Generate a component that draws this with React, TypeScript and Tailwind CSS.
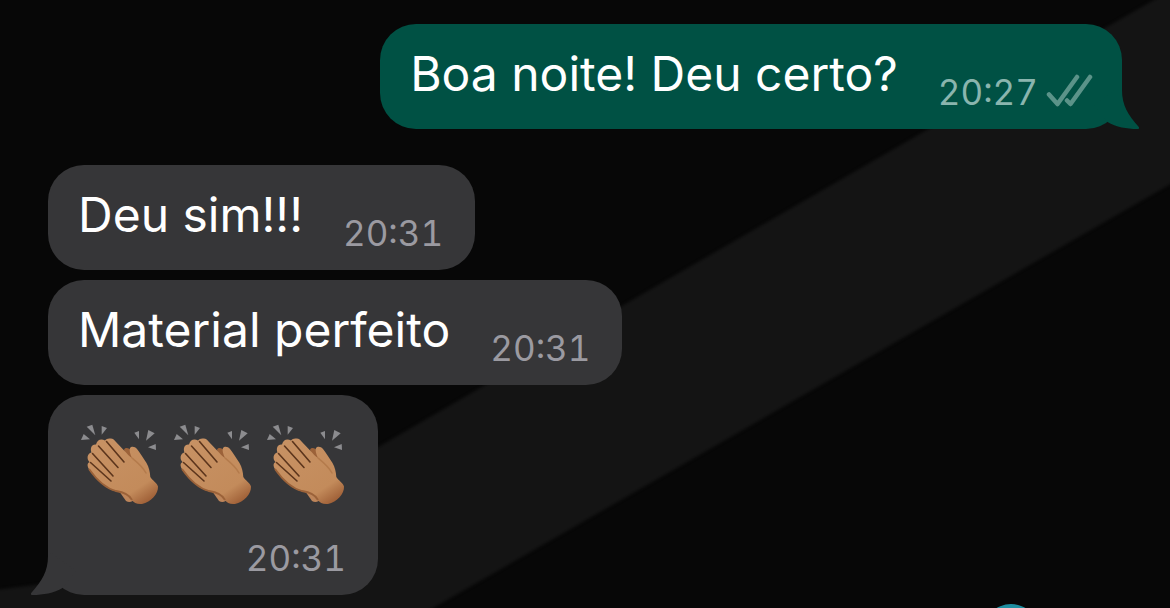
import type { ReactNode } from "react";

function Wallpaper() {
  return (
    <svg
      aria-hidden="true"
      className="absolute inset-0 -z-10 h-full w-full"
      viewBox="0 0 1170 608"
      preserveAspectRatio="xMaxYMin slice"
    >
      <defs>
        <filter id="soft" x="-5%" y="-5%" width="110%" height="110%" colorInterpolationFilters="sRGB">
          <feGaussianBlur stdDeviation="1.5" />
        </filter>
      </defs>
      <path
        d="M1154 0L1190 -21V173L433 608L400 627H-20V592L50 583L380 446L620 307L925 131Z"
        fill="#141414"
        filter="url(#soft)"
      />
      <circle cx="1011" cy="632" r="28" fill="#1f8ea0" />
    </svg>
  );
}

function TailRight() {
  return (
    <svg aria-hidden="true" className="absolute -right-[18px] bottom-0" width="56" height="44" viewBox="0 0 56 44">
      <path d="M38 0V5C38 20 44 30 54.800 42Q56 44 53 44C43 44 32 42 23.500 37L10 20Z" fill="#005144" />
    </svg>
  );
}

function TailLeft() {
  return (
    <svg aria-hidden="true" className="absolute -left-[18px] bottom-0" width="56" height="44" viewBox="0 0 56 44">
      <path d="M18 0V5C18 20 12 30 1.200 42Q0 44 3 44C13 44 24 42 32.500 37L46 20Z" fill="#363638" />
    </svg>
  );
}

function Checks() {
  return (
    <svg
      role="img"
      aria-label="Entregue"
      width="48"
      height="36"
      viewBox="0 0 48 36"
      fill="none"
      stroke="#5b9389"
      strokeWidth="4.5"
      strokeLinecap="round"
      strokeLinejoin="round"
    >
      <path d="M3 20.500L11.500 30L31 3" />
      <path d="M21 26.500L24.500 30L44 3" />
    </svg>
  );
}

function Clap() {
  return (
    <svg role="img" aria-label="Palmas" width="80" height="84" viewBox="0 0 80 84">
      <defs>
        <linearGradient id="skin" x1="0.2" y1="0.1" x2="0.85" y2="1">
          <stop offset="0" stopColor="#c79163" />
          <stop offset="0.75" stopColor="#c38b5b" />
          <stop offset="1" stopColor="#9c5c34" />
        </linearGradient>
      </defs>
      <g fill="#8c8c8f">
        <path d="M1 19L3.700 13L10 18.300Z" />
        <path d="M6.700 5.700L12.300 3.700L15.300 14.300Z" />
        <path d="M21.700 5L27 7L21.700 13.700Z" />
        <path d="M54.300 11.700L59 10L59 18.300Z" />
        <path d="M68.300 9L74.700 12.300L66 19.700Z" />
        <path d="M75.700 23L76 29L68 26.300Z" />
      </g>
      <path d="M44 29C45 25.500 50 27 52 31L56 40L46 35Z" fill="#9c6239" />
      <path d="M39 70L46 80C49 82 53 81 54 78L50 70Z" fill="#bd855a" />
      <path
        d="M30 17.500C32.500 17 34.500 19 36 21L46 31.500C48 34 50 36 52 37C50 33 49 29 50 27C51.500 25 55 25.500 57 28C60 32 64 38 66.500 42C69 46 70 51 70.300 56C73 60 77 62 78 65.500C78.500 73 71 81 62 83C57 83.500 54 82 52 79C49 74 43 71.500 36 70.500C30 69 24 64.500 19 60L9.500 49C7.500 46 6.500 42.500 9.500 41C6.500 38 7 32.500 11.500 31.500C10 27 11.500 23 16 23.500C17 19 21 17 25 19.500C26 18 28 17.300 30 17.500Z"
        fill="url(#skin)"
      />
      <path
        d="M10.500 41.500L31 60M12.500 32.500L33 55M18.500 25L38 46.500M26.500 20.500L44 41"
        fill="none"
        stroke="#5c351c"
        strokeWidth="1.6"
        strokeLinecap="round"
      />
      <path d="M52 37C58 42 63 46 66 52" fill="none" stroke="#b47b4c" strokeWidth="1.5" strokeLinecap="round" />
      <path d="M9 48C16 58 24 67 36 70C43 71 49 73 52 79" fill="none" stroke="#9b6239" strokeWidth="1.8" />
    </svg>
  );
}

function Incoming({ text, time }: { text: string; time: string }) {
  return (
    <li className="flex h-[105px] items-start gap-10 rounded-[36px] bg-[#363638] pt-5 pr-8 pl-[30px]">
      <p className="text-[48px] leading-[60px] text-white">{text}</p>
      <time className="pt-[27px] text-[35px] leading-[42px] text-[#9b9aa1] tabular-nums">{time}</time>
    </li>
  );
}

function Received({ children }: { children: ReactNode }) {
  return <ul className="flex flex-col items-start gap-[10px]">{children}</ul>;
}

export default function App() {
  return (
    <main className="relative isolate flex min-h-screen flex-col gap-9 overflow-hidden bg-[#070707] pt-6 pr-12 pb-3 pl-12 font-['Inter','Liberation_Sans',sans-serif]">
      <Wallpaper />
      <div className="relative flex h-[105px] items-start gap-10 self-end rounded-[36px] bg-[#005144] pt-5 pr-7 pl-[30px]">
        <TailRight />
        <p className="text-[48px] leading-[60px] text-white">Boa noite! Deu certo?</p>
        <div className="relative flex items-center gap-2 pt-[27px]">
          <time className="text-[35px] leading-[42px] text-[#8ab5ae] tabular-nums">20:27</time>
          <Checks />
        </div>
      </div>
      <Received>
        <Incoming text="Deu sim!!!" time="20:31" />
        <Incoming text="Material perfeito" time="20:31" />
        <li className="relative flex flex-col items-end gap-8 rounded-[36px] bg-[#363638] pt-[26px] pr-8 pb-4 pl-8">
          <TailLeft />
          <div className="flex gap-[13px]">
            <Clap />
            <Clap />
            <Clap />
          </div>
          <time className="text-[35px] leading-[42px] text-[#9b9aa1] tabular-nums">20:31</time>
        </li>
      </Received>
    </main>
  );
}
